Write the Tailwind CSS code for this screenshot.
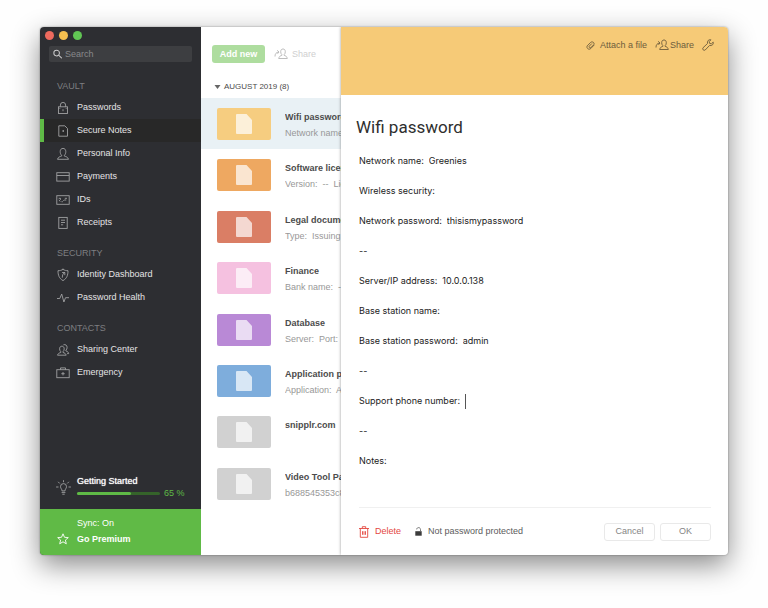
<!DOCTYPE html>
<html lang="en">
<head>
  <meta charset="UTF-8" />
  <meta name="viewport" content="width=device-width, initial-scale=1.0" />
  <title>Secure Notes</title>
  <script src="https://cdn.jsdelivr.net/npm/@tailwindcss/browser@4"></script>
</head>
<body class="bg-[#fefefe] h-screen px-10 pt-[27px] pb-[53px] font-['Liberation_Sans',sans-serif] text-[9px]">
  <div class="flex h-full rounded overflow-hidden bg-white shadow-[0_10px_28px_rgba(0,0,0,0.46),0_0_2px_rgba(0,0,0,0.4)]">

    <!-- Sidebar -->
    <aside class="w-[161px] shrink-0 flex flex-col bg-[#2d2e32] text-[#e4e4e5]">
      <div class="flex gap-[5px] px-[5px] pt-1">
        <span class="size-[9px] rounded-full bg-[#ed6a5e]"></span>
        <span class="size-[9px] rounded-full bg-[#f5bf4f]"></span>
        <span class="size-[9px] rounded-full bg-[#61c554]"></span>
      </div>
      <label class="mx-[9px] mt-[6px] h-4 flex items-center gap-[3px] px-1 rounded-xs bg-[#3d3e41]">
        <svg class="size-[10px] text-[#c8c8c9]" viewBox="0 0 10 10" fill="none" stroke="currentColor" stroke-width="1.1" stroke-linecap="round"><circle cx="4" cy="4" r="3.1"/><path d="M6.4 6.4 9.3 9.3"/></svg>
        <input type="text" aria-label="Search" placeholder="Search" class="w-full pt-px outline-none placeholder:text-[#88898b]" />
      </label>

      <nav class="mt-[14px] [&_span]:pt-px">
        <h2 class="h-5 flex items-center pl-[17px] pt-px text-[#7d7e81]">VAULT</h2>
        <a href="#" class="h-[23px] flex items-center gap-[7px] pl-4">
          <svg class="size-[14px] text-[#a0a1a3]" viewBox="0 0 14 14" fill="none" stroke="currentColor" stroke-width="0.9"><rect x="2.5" y="5.8" width="9" height="6.7"/><path d="M4.4 5.8V4a2.6 2.6 0 0 1 5.2 0v1.8M7 8.2v2"/><path d="M2.5 7.4h2M9.5 7.4h2" stroke-width="0.5"/></svg>
          <span>Passwords</span>
        </a>
        <a href="#" class="h-[23px] flex items-center gap-[7px] pl-3 bg-[#282828] border-l-4 border-[#5fba46]">
          <svg class="size-[14px] text-[#a0a1a3]" viewBox="0 0 14 14" fill="none" stroke="currentColor" stroke-width="0.9"><path d="M2.8 1.8h6l2.7 2.7v7.7H2.8z"/><path d="M7.2 6v2" stroke-width="1.2"/></svg>
          <span>Secure Notes</span>
        </a>
        <a href="#" class="h-[23px] flex items-center gap-[7px] pl-4">
          <svg class="size-[14px] text-[#a0a1a3]" viewBox="0 0 14 14" fill="none" stroke="currentColor" stroke-width="0.9" stroke-linejoin="round"><path d="M5.6 8.2C4.6 7.4 4.2 6.2 4.2 4.5 4.2 2.6 5.3 1.4 7 1.4s2.8 1.2 2.8 3.1c0 1.7-.4 2.9-1.4 3.7v.9c1.9.5 3.4 1 4.1 3.2H1.5c.7-2.2 2.2-2.7 4.1-3.2z"/></svg>
          <span>Personal Info</span>
        </a>
        <a href="#" class="h-[23px] flex items-center gap-[7px] pl-4">
          <svg class="size-[14px] text-[#a0a1a3]" viewBox="0 0 14 14" fill="none" stroke="currentColor" stroke-width="0.9"><rect x="0.8" y="2.7" width="12.4" height="8.4"/><path d="M0.8 5.5h12.4"/></svg>
          <span>Payments</span>
        </a>
        <a href="#" class="h-[23px] flex items-center gap-[7px] pl-4">
          <svg class="size-[14px] text-[#a0a1a3]" viewBox="0 0 14 14" fill="none" stroke="currentColor" stroke-width="0.9"><rect x="0.8" y="2.7" width="12.4" height="8.6"/><path d="M2.7 5.3h1.8v1.5M2.9 6.8l1.3 1.7M5.5 8.7h1.3M7.3 7.9l1-1M8.8 5.3H11M8.3 7h2"/></svg>
          <span>IDs</span>
        </a>
        <a href="#" class="h-[23px] flex items-center gap-[7px] pl-4">
          <svg class="size-[14px] text-[#a0a1a3]" viewBox="0 0 14 14" fill="none" stroke="currentColor" stroke-width="0.9"><rect x="2.8" y="1.4" width="8.4" height="11"/><path d="M5 4.2h4M5 6.5h4M5 8.8h2.2"/></svg>
          <span>Receipts</span>
        </a>

        <h2 class="mt-[9px] h-5 flex items-center pl-[17px] pt-px text-[#7d7e81]">SECURITY</h2>
        <a href="#" class="h-[23px] flex items-center gap-[7px] pl-4">
          <svg class="size-[14px] text-[#a0a1a3]" viewBox="0 0 14 14" fill="none" stroke="currentColor" stroke-width="0.9" stroke-linecap="round"><path d="M7 1.4c1.6 1 3.3 1.3 5 1.3 0 4.5-1.2 7.8-5 9.9C3.2 10.5 2 7.2 2 2.7c1.7 0 3.4-.3 5-1.3z"/><path d="M6.3 9.3c0-2 .6-3.8 2.4-5M6.5 4.5h2.300v2.300"/></svg>
          <span>Identity Dashboard</span>
        </a>
        <a href="#" class="h-[23px] flex items-center gap-[7px] pl-4">
          <svg class="size-[14px] text-[#a0a1a3]" viewBox="0 0 14 14" fill="none" stroke="currentColor" stroke-width="0.9" stroke-linejoin="round"><path d="M1 7.5h2.8L5.7 3l2.2 8 1.6-4.300h3.500"/></svg>
          <span>Password Health</span>
        </a>

        <h2 class="mt-[9px] h-5 flex items-center pl-[17px] pt-px text-[#7d7e81]">CONTACTS</h2>
        <a href="#" class="h-[23px] flex items-center gap-[7px] pl-4">
          <svg class="size-[14px] text-[#a0a1a3]" viewBox="0 0 14 14" fill="none" stroke="currentColor" stroke-width="0.9" stroke-linejoin="round"><path d="M4.8 8.7C4 8 3.6 7 3.6 5.8c0-1.6.9-2.6 2.3-2.6s2.3 1 2.3 2.6c0 1.2-.4 2.2-1.2 2.9v.8c1.6.4 2.7 1 3.2 2.7H1.5c.5-1.7 1.7-2.300 3.300-2.700z"/><path d="M7.400 1.800c2.200-.7 3.700.6 3.700 2.600 0 1.300-.4 2.200-1.200 2.900v.7c1.600.4 2.400 1 2.800 2.600h-1.600"/></svg>
          <span>Sharing Center</span>
        </a>
        <a href="#" class="h-[23px] flex items-center gap-[7px] pl-4">
          <svg class="size-[14px] text-[#a0a1a3]" viewBox="0 0 14 14" fill="none" stroke="currentColor" stroke-width="0.9"><rect x="0.8" y="3.7" width="12.4" height="8"/><path d="M4.5 3.7V1.9h5v1.8M7 6v3.4M5.3 7.7h3.4"/></svg>
          <span>Emergency</span>
        </a>
      </nav>

      <div class="mt-auto mb-[10px] flex items-center gap-[6px] pl-4">
        <svg class="size-[15px] shrink-0 text-[#a0a1a3]" viewBox="0 0 15 15" fill="none" stroke="currentColor" stroke-width="0.9" stroke-linecap="round"><path d="M6 10.5c0-1.5-1.5-2-1.5-3.9a3 3 0 0 1 6 0c0 1.9-1.5 2.4-1.5 3.9zM6 12.4h3M6.700 14.200h1.600M7.500.6v1.200M.5 7h1.600M12.900 7h1.600M2.400 2.100l1.100 1.100M12.600 2.100l-1.100 1.100"/></svg>
        <div class="grow">
          <p class="text-white leading-3 text-shadow-[0_0_1px_#fff]">Getting Started</p>
          <div class="flex items-center gap-1 leading-3">
            <div class="w-[83px] h-[3px] rounded-full bg-[#35632a]"><div class="h-full rounded-full bg-[#5fba46]" style="width: 65%"></div></div>
            <span class="text-[#5fba46]">65 %</span>
          </div>
        </div>
      </div>

      <div class="h-[46px] pl-[17px] pb-[3px] flex flex-col justify-center bg-[#60ba46] text-white leading-4">
        <p class="pl-5">Sync: On</p>
        <a href="#" class="flex items-center gap-2 font-bold">
          <svg class="size-3" viewBox="0 0 12 12" fill="none" stroke="currentColor" stroke-width="0.9" stroke-linejoin="round"><path d="M6 .8 7.5 4.3l3.8.3-2.9 2.5.9 3.7L6 8.8l-3.3 2 .9-3.7L.7 4.6l3.8-.3z"/></svg>
          Go Premium
        </a>
      </div>
    </aside>

    <!-- Notes list -->
    <section class="w-[140px] shrink-0 overflow-hidden whitespace-nowrap">
      <div class="flex items-center gap-[9px] pl-[11px] pt-[18px]">
        <button class="w-[53px] h-[18px] pt-px rounded-[3px] bg-[#aedd9f] text-white font-bold">Add new</button>
        <button class="flex items-center gap-1 text-[#cfcfcf]">
          <svg class="w-[14px] h-3" viewBox="0 0 14 12" fill="none" stroke="#b5b5b5" stroke-width="0.9" stroke-linejoin="round"><path d="M7.8 6.5C7 5.8 6.7 5 6.7 3.7 6.7 2 7.5 1 9 1s2.300 1 2.300 2.700c0 1.300-.3 2.100-1.100 2.800v.9c1.700.4 2.700 1.200 3.100 3.100H4.700c.4-1.900 1.400-2.700 3.100-3.100zM1 8.500C1 6 2 4.300 4.800 4M3.200 2.300 5 4 3.500 5.800"/></svg>
          <span class="pt-px">Share</span>
        </button>
      </div>
      <h2 class="h-[35px] flex items-center gap-[3px] pl-[13px] pt-3 text-[8px] text-[#4a4a4a]">
        <svg class="w-[7px] h-1" viewBox="0 0 7 4" fill="#666"><path d="M.5 0h6l-3 4z"/></svg>
        AUGUST 2019 (8)
      </h2>
      <ul id="notes" class="grid auto-rows-fr h-[411px]"></ul>
    </section>

    <!-- Note editor -->
    <main class="relative grow min-w-0 flex flex-col bg-white shadow-[0_0_3px_rgba(0,0,0,0.4)]">
      <header class="h-[68px] flex items-start justify-end gap-2 pr-[14px] pt-3 bg-[#f6ca77] text-[#6d5c3c]">
        <button class="flex items-center gap-[5px] h-3">
          <svg class="size-[9px]" viewBox="0 0 9 9" fill="none" stroke="currentColor" stroke-width="0.9" stroke-linecap="round"><path d="M7.9 4.3 4.7 7.6C3 9.2.1 7.4 1.2 4.9L4.5 1.5c1.4-1.4 4.3-.2 3.4 2L5.2 6.3c-1.1 1.100-2.700 0-1.900-1.200l2.300-2.300"/></svg>
          <span class="pt-px">Attach a file</span>
        </button>
        <button class="flex items-center gap-px h-3">
          <svg class="w-[14px] h-3" viewBox="0 0 14 12" fill="none" stroke="currentColor" stroke-width="0.9" stroke-linejoin="round"><path d="M7.8 6.5C7 5.8 6.7 5 6.7 3.7 6.7 2 7.5 1 9 1s2.300 1 2.300 2.700c0 1.300-.3 2.100-1.100 2.800v.9c1.700.4 2.700 1.200 3.100 3.100H4.700c.4-1.900 1.400-2.700 3.100-3.100zM1 8.500C1 6 2 4.300 4.800 4M3.200 2.300 5 4 3.500 5.800"/></svg>
          <span class="pt-px">Share</span>
        </button>
        <button class="h-3" aria-label="Settings">
          <svg class="size-3" viewBox="0 0 12 12" fill="none" stroke="currentColor" stroke-width="0.9" stroke-linejoin="round"><path d="M8.9.8C7 .2 4.800 1.800 5.500 4.500L1 8.800c-1.200 1.300.9 3.400 2.200 2.200l4.300-4.500c2.700.7 4.300-1.500 3.700-3.400L9.400 4.800 7.600 4.400 7.200 2.600z"/></svg>
        </button>
      </header>

      <h1 class="pl-[15px] pt-5 font-['Roboto',sans-serif] text-[17px] leading-6 text-[#2e2e2e]">Wifi password</h1>

      <form class="pl-[18px] pr-[17px] pt-[7px] grow flex flex-col font-['Inter',sans-serif] text-[#222]">
        <div class="flex items-center gap-[5px] h-[30px]"><label for="network">Network name:</label><input id="network" class="grow outline-none" value="Greenies" /></div>
        <div class="flex items-center gap-[5px] h-[30px]"><label for="security">Wireless security:</label><input id="security" class="grow outline-none" /></div>
        <div class="flex items-center gap-[5px] h-[30px]"><label for="password">Network password:</label><input id="password" class="grow outline-none" value="thisismypassword" /></div>
        <p class="flex items-center h-[30px]">--</p>
        <div class="flex items-center gap-[5px] h-[30px]"><label for="server">Server/IP address:</label><input id="server" class="grow outline-none" value="10.0.0.138" /></div>
        <div class="flex items-center gap-[5px] h-[30px]"><label for="station">Base station name:</label><input id="station" class="grow outline-none" /></div>
        <div class="flex items-center gap-[5px] h-[30px]"><label for="station-password">Base station password:</label><input id="station-password" class="grow outline-none" value="admin" /></div>
        <p class="flex items-center h-[30px]">--</p>
        <div class="flex items-center gap-[5px] h-[30px]"><label for="phone">Support phone number:</label><span class="w-px h-[15px] bg-[#555]"></span><input id="phone" class="grow outline-none" /></div>
        <p class="flex items-center h-[30px]">--</p>
        <div class="flex items-center gap-[5px] h-[30px]"><label for="notes-text">Notes:</label><input id="notes-text" class="grow outline-none" /></div>
      </form>

      <footer class="ml-[18px] mr-[17px] h-12 flex items-center border-t border-[#f0f0f0] text-[#5c5c5c]">
        <button class="flex items-center gap-[6px] text-[#e4473f]">
          <svg class="w-[10px] h-3" viewBox="0 0 10 12" fill="none" stroke="currentColor" stroke-width="0.9"><path d="M0 2.5h10M3.300 2.300V.7h3.400v1.600M1.300 2.500v8.800h7.400V2.500M3.500 5.200v3.600M5 5.200v3.600M6.500 5.200v3.600"/></svg>
          Delete
        </button>
        <button class="ml-[14px] flex items-center gap-[6px]">
          <svg class="w-[7px] h-[9px]" viewBox="0 0 7 9"><rect x="0.3" y="4.2" width="6.4" height="4.5" fill="#3c3c3c"/><path d="M1.7 2.4C1.7 0 5.5 0 5.5 2.5V4.5" fill="none" stroke="#666" stroke-width="0.9"/></svg>
          Not password protected
        </button>
        <button class="ml-auto w-[51px] h-[18px] pt-px rounded-[3px] border border-[#e9e9e9] text-[#858585]">Cancel</button>
        <button class="ml-[5px] w-[51px] h-[18px] pt-px rounded-[3px] border border-[#e9e9e9] text-[#858585]">OK</button>
      </footer>
    </main>
  </div>

  <script>
    const notes = [
      { title: "Wifi password", text: "Network name:  Greenies", color: "#f6cd80", active: true },
      { title: "Software license", text: "Version:  --  License key:", color: "#eea861" },
      { title: "Legal document", text: "Type:  Issuing organization:", color: "#da7e65" },
      { title: "Finance", text: "Bank name:  --", color: "#f5c1e0" },
      { title: "Database", text: "Server:  Port:  --", color: "#b989d6" },
      { title: "Application password", text: "Application:  App", color: "#7eaddc" },
      { title: "snipplr.com", text: "", color: "#d1d1d1" },
      { title: "Video Tool Pass", text: "b688545353c8a1", color: "#d1d1d1" }
    ];

    document.getElementById("notes").innerHTML = notes.map(note => `
      <li class="flex items-start gap-[14px] pl-4 pt-[10px] ${note.active ? "bg-[#e9f1f5]" : ""}">
        <div class="w-[54px] h-8 shrink-0 rounded-xs flex items-center justify-center" style="background: ${note.color}">
          <svg class="w-4 h-5" viewBox="0 0 16 20" fill="#fff" fill-opacity="0.7"><path d="M1 0h9.5L16 6v13a1 1 0 0 1-1 1H1a1 1 0 0 1-1-1V1a1 1 0 0 1 1-1z"/></svg>
        </div>
        <div class="grow min-w-0 overflow-hidden pt-px leading-4">
          <h3 class="font-bold text-[#4c4c4c]">${note.title}</h3>
          <p class="whitespace-pre text-[#989898]">${note.text}</p>
        </div>
      </li>
    `).join("");
  </script>
</body>
</html>
